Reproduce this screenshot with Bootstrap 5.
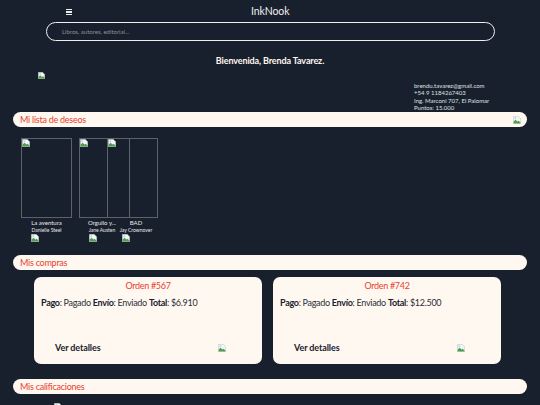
<!DOCTYPE html>
<html lang="es">
<head>
    <meta charset="UTF-8">
    <meta name="viewport" content="width=device-width, initial-scale=1.0">
    <title>InkNook</title>
    <link rel="stylesheet" href="https://cdn.jsdelivr.net/npm/bootstrap@5.3.0/dist/css/bootstrap.min.css">
    <script src="https://cdn.jsdelivr.net/npm/bootstrap@5.3.0/dist/js/bootstrap.bundle.min.js"></script>
    <style>
        html, body { height: 405px; overflow: hidden; }
        body { background: #19202d; color: #fff8f0; font-family: "Lato", "Liberation Sans", sans-serif; }
        .ink-top { height: 22px; padding: 1px 0 0 66px; }
        .ink-burger { width: 6px; height: 6px; flex: none; background: repeating-linear-gradient(#eee 0 1.4px, transparent 1.4px 2.3px); }
        .ink-brand { font-size: 10.5px; letter-spacing: -.1px; margin-left: 179px; color: #eee; }
        .ink-search { margin: 0 45px 0 46px; height: 19px; border: 1px solid #eee; border-radius: 10px; padding-left: 15px; font-size: 6px; color: #8d929a; line-height: 17px; }
        .ink-hello { font-size: 9px; font-weight: 700; letter-spacing: -.12px; text-align: center; margin-top: 14px; line-height: 12px; }
        .ink-profile { height: 45px; padding: 5px 0 0 38px; }
        .ink-profile svg { flex: none; }
        .ink-contact { margin: 10px 0 0 369px; font-size: 6px; line-height: 7.3px; color: #dfe0e0; white-space: nowrap; }
        .ink-pill { margin: 0 13px; height: 15px; background: #fff8f0; border-radius: 8px; color: #e8402f; font-size: 9px; letter-spacing: -.25px; line-height: 15px; padding: 0 6px 0 7px; }
        .ink-books { padding-left: 21px; margin-top: 11px; height: 117px; align-items: flex-start; }
        .ink-book { flex: none; width: 51px; text-align: center; color: #e8e8e8; }
        .ink-book-b { margin-left: 7px; }
        .ink-book-c { margin-left: -23px; }
        .ink-cover { height: 80px; border: 1px solid #5c616a; margin-bottom: 1px; }
        .ink-cover svg { display: block; }
        .ink-book-title { font-size: 6px; line-height: 8px; }
        .ink-book-author { font-size: 5px; line-height: 7px; white-space: nowrap; }
        .ink-book-b .ink-book-title, .ink-book-b .ink-book-author { margin-right: 5px; }
        .ink-book-c .ink-book-title, .ink-book-c .ink-book-author { margin-left: 7px; }
        .ink-book-img { display: block; margin: 0 0 0 10px; }
        .ink-book-c .ink-book-img { margin-left: 15px; }
        .ink-orders { margin: 7px 39px 0 34px; gap: 11px; }
        .ink-order { flex: 1 1 0; height: 87px; background: #fff8f0; border-radius: 7px; color: #2b2f38; padding: 3px 36px 0 7px; }
        .ink-order-title { color: #e8402f; font-size: 9px; letter-spacing: -.3px; text-align: center; line-height: 12px; margin-right: -29px; }
        .ink-order-line { font-size: 9px; letter-spacing: -.3px; line-height: 12px; margin-top: 5px; white-space: nowrap; }
        .ink-order-line b { color: #19202d; }
        .ink-order-foot { margin: 33px 0 0 14px; font-size: 9px; font-weight: 700; letter-spacing: -.1px; line-height: 12px; color: #19202d; }
        .ink-last { margin-top: 15px; }
        .ink-rating { margin: 9px 0 0 54px; display: block; }
    </style>
</head>
<body>
    <svg width="0" height="0" class="position-absolute">
        <symbol id="broken" viewBox="0 0 8 8">
            <path d="M.3.3H5.2L7.7 2.8V7.7H.3Z" fill="#f2f6f6" stroke="#b4baba" stroke-width=".5"/>
            <path d="M.6 7.4V5.6L2.6 3.8 4.4 5.6 5.6 4.8 7.4 6.4V7.4Z" fill="#4f9e4f"/>
            <circle cx="2.3" cy="2.2" r="1" fill="#b9d4f2"/>
        </symbol>
    </svg>

    <div class="ink-top d-flex align-items-center">
        <div class="ink-burger"></div>
        <div class="ink-brand">InkNook</div>
    </div>
    <div class="ink-search">Libros, autores, editorial...</div>
    <div class="ink-hello">Bienvenida, Brenda Tavarez.</div>

    <div class="ink-profile d-flex">
        <svg width="7" height="7"><use href="#broken"/></svg>
        <div class="ink-contact">
            brendu.tavarez@gmail.com<br>
            +54 9 1184267403<br>
            Ing. Marconi 707, El Palomar<br>
            Puntos: 15.000
        </div>
    </div>

    <div class="ink-pill d-flex justify-content-between align-items-center">
        <span>Mi lista de deseos</span>
        <svg width="8" height="8"><use href="#broken"/></svg>
    </div>

    <div class="ink-books d-flex">
        <div class="ink-book">
            <div class="ink-cover"><svg width="8" height="8"><use href="#broken"/></svg></div>
            <div class="ink-book-title">La aventura</div>
            <div class="ink-book-author">Danielle Steel</div>
            <svg class="ink-book-img" width="8" height="8"><use href="#broken"/></svg>
        </div>
        <div class="ink-book ink-book-b">
            <div class="ink-cover"><svg width="8" height="8"><use href="#broken"/></svg></div>
            <div class="ink-book-title">Orgullo y...</div>
            <div class="ink-book-author">Jane Austen</div>
            <svg class="ink-book-img" width="8" height="8"><use href="#broken"/></svg>
        </div>
        <div class="ink-book ink-book-c">
            <div class="ink-cover"><svg width="8" height="8"><use href="#broken"/></svg></div>
            <div class="ink-book-title">BAD</div>
            <div class="ink-book-author">Jay Crownover</div>
            <svg class="ink-book-img" width="8" height="8"><use href="#broken"/></svg>
        </div>
    </div>

    <div class="ink-pill">Mis compras</div>

    <div class="ink-orders d-flex">
        <div class="ink-order">
            <div class="ink-order-title">Orden #567</div>
            <div class="ink-order-line"><b>Pago</b>: Pagado <b>Envío</b>: Enviado <b>Total</b>: $6.910</div>
            <div class="ink-order-foot d-flex justify-content-between align-items-center">
                <span>Ver detalles</span>
                <svg width="8" height="8"><use href="#broken"/></svg>
            </div>
        </div>
        <div class="ink-order">
            <div class="ink-order-title">Orden #742</div>
            <div class="ink-order-line"><b>Pago</b>: Pagado <b>Envío</b>: Enviado <b>Total</b>: $12.500</div>
            <div class="ink-order-foot d-flex justify-content-between align-items-center">
                <span>Ver detalles</span>
                <svg width="8" height="8"><use href="#broken"/></svg>
            </div>
        </div>
    </div>

    <div class="ink-pill ink-last">Mis calificaciones</div>
    <svg class="ink-rating" width="8" height="8"><use href="#broken"/></svg>
</body>
</html>
